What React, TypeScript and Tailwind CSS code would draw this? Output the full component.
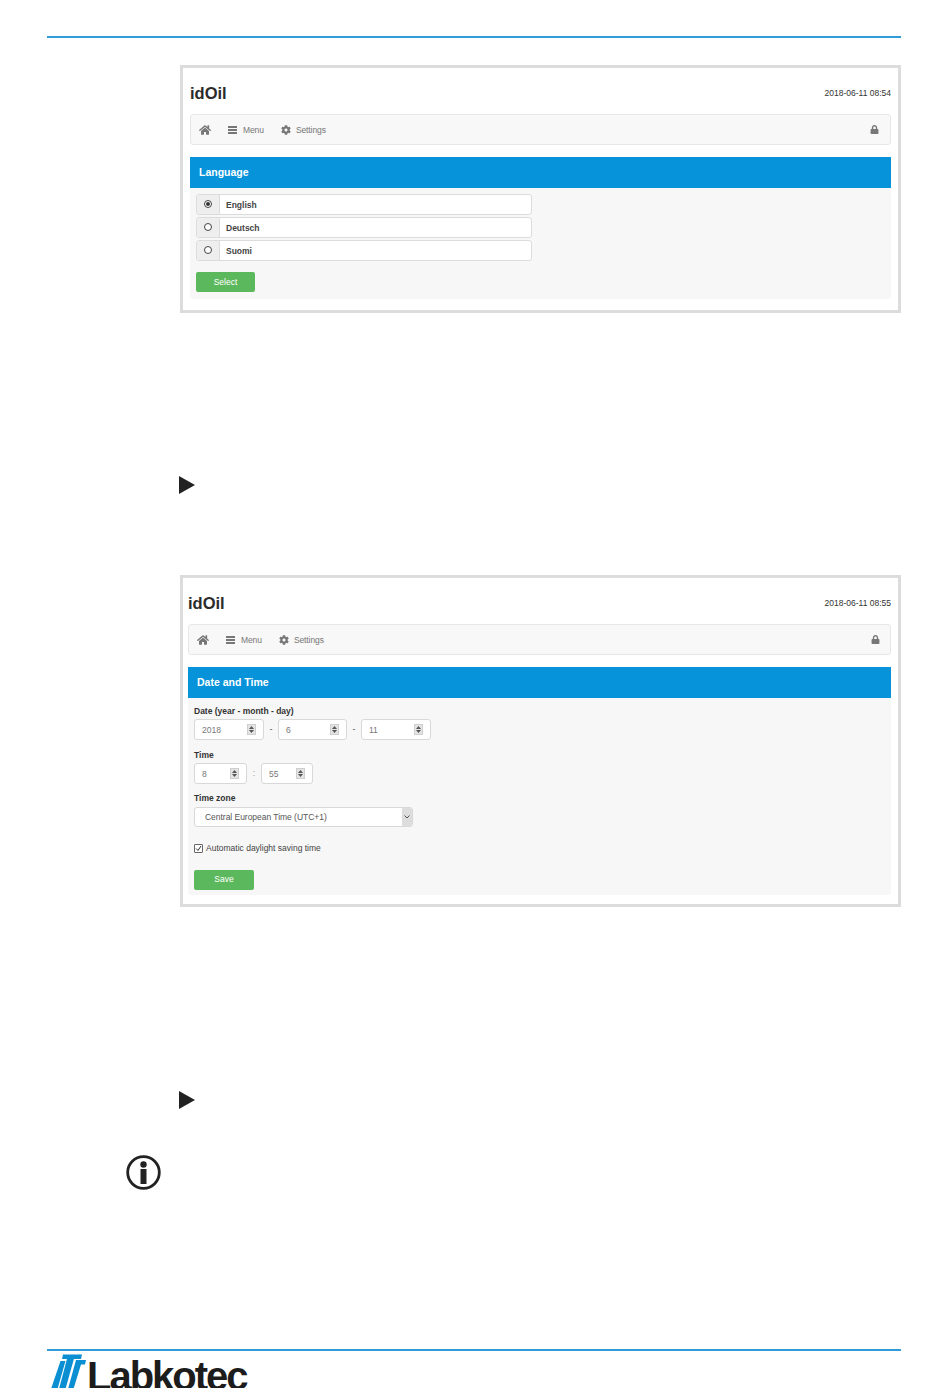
import type { ReactNode } from 'react';
import { FaCog, FaHome, FaLock } from 'react-icons/fa';

const Spinner = () => (
  <span className="flex h-[11px] w-[9px] flex-col items-center justify-center gap-[1px] border border-[#cfcfcf] bg-[#e4e4e4]">
    <svg width="5" height="3" viewBox="0 0 5 3"><path d="M2.5 0 5 3H0z" fill="#555" /></svg>
    <svg width="5" height="3" viewBox="0 0 5 3"><path d="M0 0h5L2.5 3z" fill="#555" /></svg>
  </span>
);

const NumberField = ({ value, width }: { value: string; width: string }) => (
  <div className={`flex h-[21px] items-center justify-between rounded-[3px] border border-[#d8d8d8] bg-white pl-[7px] pr-[7px] text-[8.5px] text-[#777] ${width}`}>
    <span className="pt-[1px]">{value}</span>
    <Spinner />
  </div>
);

const Nav = ({ lockPad }: { lockPad: string }) => (
  <div className={`flex h-[31px] items-center rounded-[3px] border border-[#e7e7e7] bg-[#f8f8f8] pl-[8px] text-[8.5px] leading-[12px] tracking-[-0.1px] text-[#777] ${lockPad}`}>
    <FaHome className="h-[12px] w-[12px] text-[#777]" />
    <span className="ml-[17px] flex flex-col gap-[1px]">
      <span className="h-[2px] w-[9px] bg-[#777]" />
      <span className="h-[2px] w-[9px] bg-[#777]" />
      <span className="h-[2px] w-[9px] bg-[#777]" />
    </span>
    <span className="ml-[6px]">Menu</span>
    <FaCog className="ml-[17px] h-[10px] w-[10px] text-[#777]" />
    <span className="ml-[5px]">Settings</span>
    <FaLock className="ml-auto h-[9px] w-[9px] text-[#777]" />
  </div>
);

const Screen = ({ title, stamp, inset, lockPad, height, marginTop, children }: {
  title: string;
  stamp: string;
  inset: string;
  lockPad: string;
  height: string;
  marginTop: string;
  children: ReactNode;
}) => (
  <div className={`ml-[180px] w-[721px] border-[3px] border-[#dcdcdc] bg-white ${inset} ${height} ${marginTop}`}>
    <div className="flex h-[46px] items-center justify-between pt-[4px]">
      <span className="text-[16.5px] font-bold text-[#2b2b2b]">idOil</span>
      <span className="text-[8.5px] text-[#333]">{stamp}</span>
    </div>
    <Nav lockPad={lockPad} />
    <div className="mt-[12px] flex h-[31px] items-center bg-[#0693da] pl-[9px] text-[10.5px] font-bold text-white">{title}</div>
    {children}
  </div>
);

const Language = ({ label, checked }: { label: string; checked?: boolean }) => (
  <div className="flex h-[21px] w-[336px] overflow-hidden rounded-[3px] border border-[#dcdcdc] bg-white">
    <span className="flex w-[23px] items-center justify-center border-r border-[#dcdcdc] bg-[#eeeeee] pb-[1px]">
      <span className="flex h-[8px] w-[8px] items-center justify-center rounded-full border border-[#444] bg-white">
        {checked && <span className="h-[4px] w-[4px] rounded-full bg-[#333]" />}
      </span>
    </span>
    <span className="flex items-center pl-[6px] pt-[1px] text-[8.5px] font-bold text-[#444]">{label}</span>
  </div>
);

const FieldLabel = ({ children, className }: { children: ReactNode; className?: string }) => (
  <div className={`text-[8.5px] font-bold leading-[10px] text-[#333] ${className ?? ''}`}>{children}</div>
);

const Arrow = ({ marginTop }: { marginTop: string }) => (
  <svg className={`ml-[179px] block ${marginTop}`} width="16" height="18" viewBox="0 0 16 18">
    <path d="M0 0 16 9 0 18z" fill="#222" />
  </svg>
);

const Logo = () => (
  <div className="ml-[51px] mt-[2px] flex h-[36px] items-start overflow-hidden">
    <svg width="35" height="36" viewBox="0 0 35 36" className="shrink-0">
      <g fill="#0b8fd3">
        <path d="M9.500 8h5L6.500 36H0z" />
        <path d="M17 2h7L14.500 36H8z" />
        <path d="M12 1.500h19l-1 4.500H11z" />
        <path d="M25 7h10l-1 4.500h-4L22.500 36H17z" />
      </g>
    </svg>
    <span className="ml-[1px] mt-[3px] text-[40px] font-bold leading-[40px] tracking-[-2px] text-[#1c1c1c]">Labkotec</span>
  </div>
);

const App = () => (
  <div className="h-[1388px] w-[950px] overflow-hidden bg-white font-['Liberation_Sans',Arial,sans-serif]">
    <div className="ml-[47px] mt-[36px] h-[2px] w-[854px] bg-[#2f9bd8]" />

    <Screen title="Language" stamp="2018-06-11 08:54" inset="px-[7px]" lockPad="pr-[11px]" height="h-[248px]" marginTop="mt-[27px]">
      <div className="flex h-[111px] flex-col items-start rounded-b-[3px] bg-[#f7f7f7] px-[6px] pt-[6px]">
        <div className="flex flex-col gap-[2px]">
          <Language label="English" checked />
          <Language label="Deutsch" />
          <Language label="Suomi" />
        </div>
        <button className="mt-[11px] h-[20px] w-[59px] rounded-[2px] bg-[#5cb85c] text-[8.5px] text-white">Select</button>
      </div>
    </Screen>

    <Arrow marginTop="mt-[163px]" />

    <Screen title="Date and Time" stamp="2018-06-11 08:55" inset="pl-[5px] pr-[7px]" lockPad="pr-[10px]" height="h-[332px]" marginTop="mt-[81px]">
      <div className="h-[197px] rounded-b-[3px] bg-[#f7f7f7] px-[6px] pt-[8px]">
        <FieldLabel>Date (year - month - day)</FieldLabel>
        <div className="mt-[3px] flex items-center text-[9px] text-[#555]">
          <NumberField value="2018" width="w-[70px]" />
          <span className="w-[14px] text-center">-</span>
          <NumberField value="6" width="w-[69px]" />
          <span className="w-[14px] text-center">-</span>
          <NumberField value="11" width="w-[70px]" />
        </div>
        <FieldLabel className="mt-[10px]">Time</FieldLabel>
        <div className="mt-[3px] flex items-center text-[9px] text-[#999]">
          <NumberField value="8" width="w-[53px]" />
          <span className="w-[14px] text-center">:</span>
          <NumberField value="55" width="w-[52px]" />
        </div>
        <FieldLabel className="mt-[9px]">Time zone</FieldLabel>
        <div className="mt-[4px] flex h-[20px] w-[219px] items-center justify-between rounded-[3px] border border-[#d8d8d8] bg-white pl-[10px] text-[8.5px] tracking-[-0.03px] text-[#555]">
          <span>Central European Time (UTC+1)</span>
          <span className="flex h-full w-[10px] items-center justify-center rounded-r-[2px] bg-[#dddddd]">
            <svg width="6" height="4" viewBox="0 0 6 4"><path d="M.5.5 3 3 5.500.5" fill="none" stroke="#555" /></svg>
          </span>
        </div>
        <div className="mt-[15px] flex items-center text-[8.5px] text-[#444]">
          <span className="flex h-[9px] w-[9px] items-center justify-center rounded-[1px] border border-[#666] bg-white">
            <svg width="7" height="7" viewBox="0 0 7 7"><path d="M1 3.500 3 5.500 6 1" fill="none" stroke="#333" /></svg>
          </span>
          <span className="ml-[3px]">Automatic daylight saving time</span>
        </div>
        <button className="mt-[15px] h-[20px] w-[60px] rounded-[2px] bg-[#5cb85c] text-[8.5px] text-white">Save</button>
      </div>
    </Screen>

    <Arrow marginTop="mt-[184px]" />

    <svg className="ml-[126px] mt-[46px] block" width="35" height="35" viewBox="0 0 35 35">
      <circle cx="17.500" cy="17.500" r="15.800" fill="none" stroke="#222" strokeWidth="2.800" />
      <circle cx="17.500" cy="9.500" r="3.200" fill="#222" />
      <rect x="14.500" y="14" width="6" height="15" fill="#222" />
    </svg>

    <div className="ml-[47px] mt-[159px] h-[2px] w-[854px] bg-[#2f9bd8]" />
    <Logo />
  </div>
);

export default App;
